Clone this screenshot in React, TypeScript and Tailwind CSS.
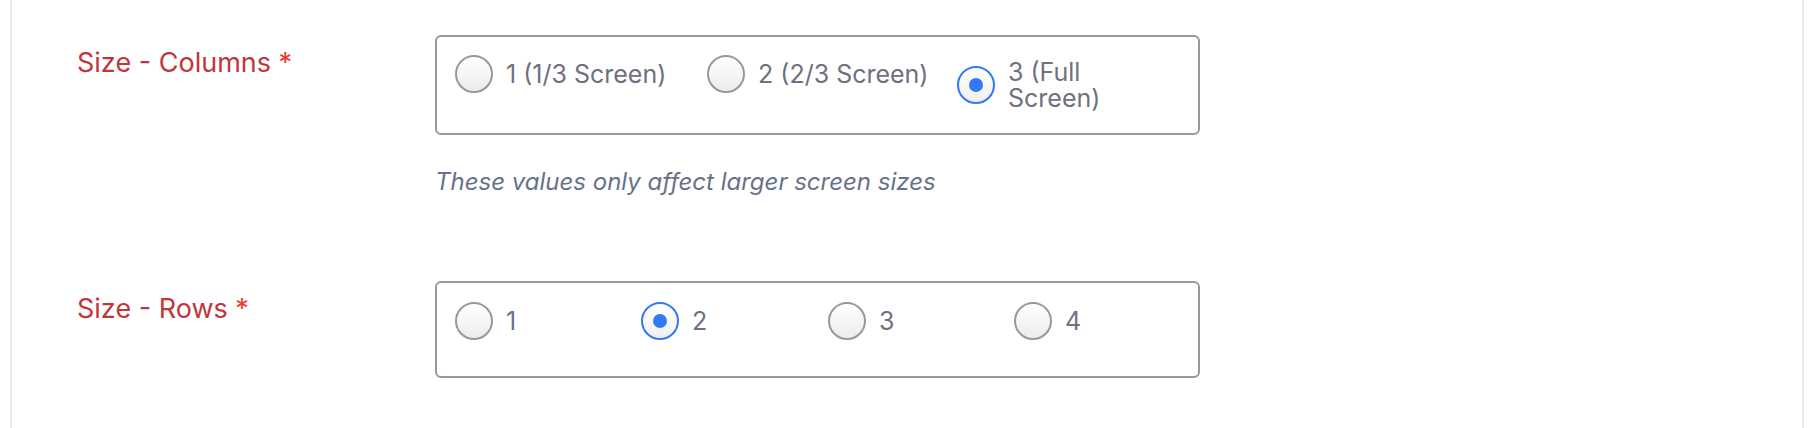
import React from 'react';

type Opt = { label: string; checked?: boolean };

const columnOpts: Opt[] = [
  { label: '1 (1/3 Screen)' },
  { label: '2 (2/3 Screen)' },
  { label: '3 (Full Screen)', checked: true },
];

const rowOpts: Opt[] = [
  { label: '1' },
  { label: '2', checked: true },
  { label: '3' },
  { label: '4' },
];

const Radio = ({ checked }: { checked?: boolean }) => (
  <span
    className={
      checked
        ? 'flex h-[38px] w-[38px] shrink-0 items-center justify-center rounded-full border-2 border-[#3478f6] bg-gradient-to-b from-white to-[#f0f0f2]'
        : 'flex h-[38px] w-[38px] shrink-0 items-center justify-center rounded-full border-2 border-[#98989d] bg-gradient-to-b from-white to-[#ececee]'
    }
  >
    {checked && <span className="h-[14px] w-[14px] rounded-full bg-[#3478f6]" />}
  </span>
);

const Option = ({ opt, wrap }: { opt: Opt; wrap?: boolean }) => (
  <label className="flex items-center gap-[13px]">
    <Radio checked={opt.checked} />
    <span className={wrap ? 'max-w-[135px] text-[25px] leading-[26px] text-[#6e717f]' : 'text-[25px] leading-[26px] text-[#6e717f]'}>
      {opt.label}
    </span>
  </label>
);

const FieldLabel = ({ text }: { text: string }) => (
  <div className="w-[358px] shrink-0 pt-[12px] text-[27px] leading-[32px] text-[#c1363a]">
    {text} <span className="text-[#ea3a2d]">*</span>
  </div>
);

export default function App() {
  return (
    <div className="min-h-[428px] bg-white font-['Inter',sans-serif]">
      <div className="ml-[10px] mr-[6px] min-h-[428px] border-x-2 border-[#e6e6eb] pl-[65px] pt-[35px]">
        {/* columns */}
        <div className="flex">
          <FieldLabel text="Size - Columns" />
          <div>
            <div className="grid h-[100px] w-[765px] grid-cols-[252px_250px_1fr] items-start rounded-[6px] border-2 border-[#98989d] pl-[18px] pt-[18px]">
              <Option opt={columnOpts[0]} />
              <Option opt={columnOpts[1]} />
              <div className="pt-[4px]">
                <Option opt={columnOpts[2]} wrap />
              </div>
            </div>
            <p className="mt-[32px] text-[24px] italic leading-[29px] text-[#66728c]">
              These values only affect larger screen sizes
            </p>
          </div>
        </div>

        {/* rows */}
        <div className="mt-[85px] flex">
          <FieldLabel text="Size - Rows" />
          <div className="grid h-[97px] w-[765px] grid-cols-[186px_187px_186px_1fr] items-start rounded-[6px] border-2 border-[#98989d] pl-[18px] pt-[19px]">
            {rowOpts.map((o) => (
              <Option key={o.label} opt={o} />
            ))}
          </div>
        </div>
      </div>
    </div>
  );
}
